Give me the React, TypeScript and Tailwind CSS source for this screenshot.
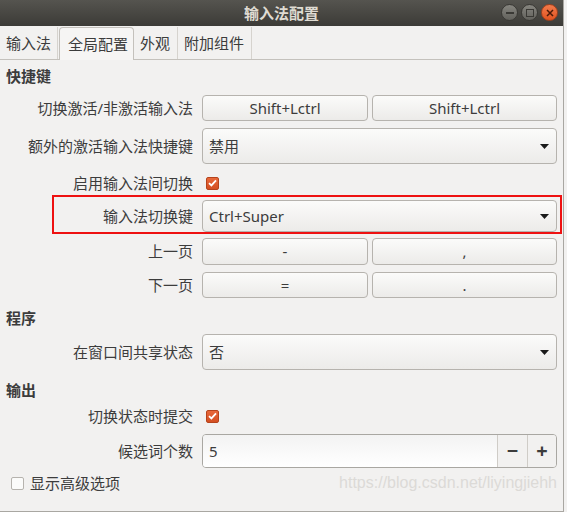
import React from "react";

const font = { fontFamily: '"Noto Sans", "Noto Sans CJK SC", sans-serif' };

function Arrow() {
  return (
    <svg width="9" height="5" viewBox="0 0 9 5" className="shrink-0">
      <path d="M0 0 L9 0 L4.5 5 Z" fill="#1a1a1a" />
    </svg>
  );
}

function Btn({ children, className = "" }: { children: React.ReactNode; className?: string }) {
  return (
    <div
      className={
        "flex h-full items-center justify-center rounded-[4px] border border-[#b6b3ae] bg-gradient-to-b from-[#fbfbfa] to-[#ecebe9] text-[15px] text-[#3c3c3c] " +
        className
      }
    >
      {children}
    </div>
  );
}

function Combo({ value }: { value: string }) {
  return (
    <div className="flex h-full w-[355px] items-center justify-between rounded-[4px] border border-[#b6b3ae] bg-gradient-to-b from-[#fbfbfa] to-[#ecebe9] pl-[6px] pr-[7px] text-[15px] text-[#3c3c3c]">
      <span>{value}</span>
      <Arrow />
    </div>
  );
}

function Check({ on }: { on: boolean }) {
  if (!on)
    return <div className="h-[13px] w-[13px] rounded-[2px] border border-[#b6b3ae] bg-[#fbfbfa]" />;
  return (
    <div className="flex h-[13px] w-[13px] items-center justify-center rounded-[2px] border border-[#b5431c] bg-gradient-to-b from-[#e8683a] to-[#d44f22]">
      <svg width="9" height="8" viewBox="0 0 9 8">
        <path d="M1 4.2 L3.4 6.4 L8 1.3" stroke="#fff" strokeWidth="1.8" fill="none" />
      </svg>
    </div>
  );
}

function Row({
  label,
  h,
  mt,
  children,
}: {
  label: string;
  h: number;
  mt: number;
  children: React.ReactNode;
}) {
  return (
    <div className="flex items-center" style={{ height: h, marginTop: mt }}>
      <div className="w-[194px] shrink-0 pr-[1px] text-right text-[15px] text-[#3c3c3c]">{label}</div>
      <div className="ml-[8px] flex h-full items-center">{children}</div>
    </div>
  );
}

function Heading({ text, mt }: { text: string; mt: number }) {
  return (
    <div className="flex h-[28px] items-center pl-[6px] text-[15px] font-bold text-[#3c3c3c]" style={{ marginTop: mt }}>
      {text}
    </div>
  );
}

function WinBtn({ kind }: { kind: "min" | "max" | "close" }) {
  const close = kind === "close";
  return (
    <div
      className={
        "flex h-[17px] w-[17px] items-center justify-center rounded-full border " +
        (close
          ? "border-[#a5401c] bg-gradient-to-b from-[#f27a4a] to-[#e0531f]"
          : "border-[#3a3935] bg-gradient-to-b from-[#86857f] to-[#62615c]")
      }
    >
      {kind === "min" && <div className="h-[2px] w-[8px] bg-[#3a3935]" />}
      {kind === "max" && <div className="h-[8px] w-[8px] border-[1.5px] border-[#3a3935]" />}
      {kind === "close" && (
        <svg width="8" height="8" viewBox="0 0 8 8">
          <path d="M1 1 L7 7 M7 1 L1 7" stroke="#4a1a08" strokeWidth="1.5" />
        </svg>
      )}
    </div>
  );
}

export default function App() {
  return (
    <div className="h-[512px] w-[567px] bg-[#f2f1f0]" style={font}>
      <div className="relative h-[512px] w-[564px] border-r border-b border-[#a9a7a2] bg-[#f2f1f0]">
        {/* title bar */}
        <div className="relative flex h-[26px] items-center justify-center bg-gradient-to-b from-[#55544f] to-[#3c3b37]">
          <span className="text-[15px] font-bold text-[#dfdbd2]">输入法配置</span>
          <div className="absolute right-[5px] top-[4px] flex gap-[3px]">
            <WinBtn kind="min" />
            <WinBtn kind="max" />
            <WinBtn kind="close" />
          </div>
        </div>

        {/* tabs */}
        <div className="flex h-[34px] items-end border-b border-[#c4c1bc] pl-0 text-[15px] text-[#3c3c3c]">
          <div className="flex h-[32px] w-[58px] items-center border-r border-[#d6d3ce] pl-[6px]">输入法</div>
          <div className="-mb-[1px] ml-[1px] flex h-[33px] w-[75px] items-center rounded-t-[4px] border border-b-0 border-[#c4c1bc] bg-[#f6f5f4] pl-[8px]">
            全局配置
          </div>
          <div className="flex h-[32px] w-[44px] items-center border-r border-[#d6d3ce] pl-[6px]">外观</div>
          <div className="flex h-[32px] w-[74px] items-center border-r border-[#d6d3ce] pl-[6px]">附加组件</div>
        </div>

        {/* panel */}
        <div className="flex flex-col pt-[2px]">
          <Heading text="快捷键" mt={0} />
          <Row label="切换激活/非激活输入法" h={26} mt={5}>
            <div className="flex h-full w-[355px] gap-[4px]">
              <Btn className="w-[166px]">Shift+Lctrl</Btn>
              <Btn className="flex-1">Shift+Lctrl</Btn>
            </div>
          </Row>
          <Row label="额外的激活输入法快捷键" h={36} mt={7}>
            <Combo value="禁用" />
          </Row>
          <Row label="启用输入法间切换" h={24} mt={7}>
            <div className="pl-[4px]">
              <Check on />
            </div>
          </Row>
          <Row label="输入法切换键" h={32} mt={5}>
            <Combo value="Ctrl+Super" />
          </Row>
          <Row label="上一页" h={27} mt={6}>
            <div className="flex h-full w-[355px] gap-[4px]">
              <Btn className="w-[166px]">-</Btn>
              <Btn className="flex-1">,</Btn>
            </div>
          </Row>
          <Row label="下一页" h={26} mt={7}>
            <div className="flex h-full w-[355px] gap-[4px]">
              <Btn className="w-[166px]">=</Btn>
              <Btn className="flex-1">.</Btn>
            </div>
          </Row>
          <Heading text="程序" mt={6} />
          <Row label="在窗口间共享状态" h={36} mt={2}>
            <Combo value="否" />
          </Row>
          <Heading text="输出" mt={6} />
          <Row label="切换状态时提交" h={24} mt={0}>
            <div className="pl-[4px]">
              <Check on />
            </div>
          </Row>
          <Row label="候选词个数" h={34} mt={6}>
            <div className="flex h-full w-[355px] overflow-hidden rounded-[4px] border border-[#a9a7a2]">
              <div className="flex flex-1 items-center bg-gradient-to-b from-[#f3f3f3] to-white pl-[6px] text-[15px] text-[#3c3c3c]">
                5
              </div>
              <div className="flex w-[30px] items-center justify-center border-l border-[#cfccc7] bg-[#f2f1f0] text-[20px] font-bold text-[#3c3c3c]">
                −
              </div>
              <div className="flex w-[29px] items-center justify-center border-l border-[#cfccc7] bg-[#f2f1f0] text-[20px] font-bold text-[#3c3c3c]">
                +
              </div>
            </div>
          </Row>
          <div className="mt-[4px] flex h-[22px] items-center justify-between pr-[6px]">
            <div className="flex items-center gap-[6px] pl-[11px] text-[15px] text-[#3c3c3c]">
              <Check on={false} />
              <span>显示高级选项</span>
            </div>
            <span className="text-[16px] text-[#dcdad7]" style={{ fontFamily: '"Liberation Sans", Arial, sans-serif' }}>
              https://blog.csdn.net/liyingjiehh
            </span>
          </div>
        </div>

        {/* annotation box */}
        <div className="absolute left-[52px] top-[195px] h-[39px] w-[510px] border-2 border-[#ee1111]" />
      </div>
    </div>
  );
}
